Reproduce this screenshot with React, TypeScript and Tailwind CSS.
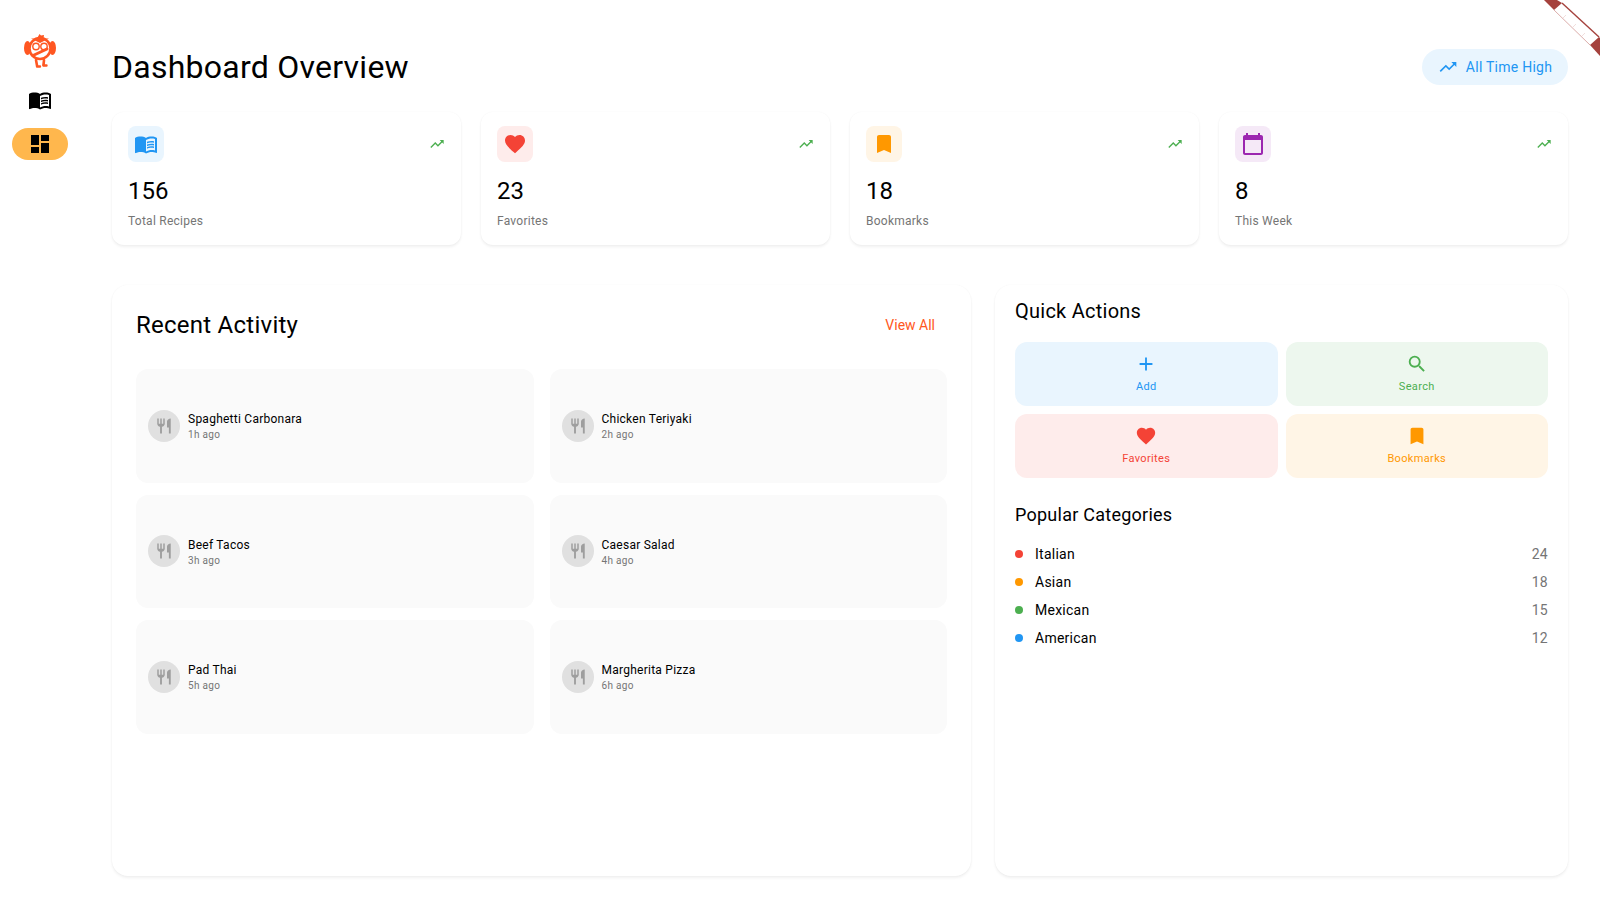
import { MdAdd, MdBookmark, MdCalendarToday, MdDashboard, MdFavorite, MdMenuBook, MdRestaurant, MdSearch, MdTrendingUp } from 'react-icons/md'
import type { ReactNode } from 'react'

// ── Data ─────────────────────────────────────────────────────────────────────

const STATS: { value: string; label: string; icon: ReactNode; bg: string }[] = [
  { value: '156', label: 'Total Recipes', icon: <MdMenuBook size={24} className="text-[#2196f3]" />, bg: 'bg-[#e9f5fe]' },
  { value: '23', label: 'Favorites', icon: <MdFavorite size={24} className="text-[#f44336]" />, bg: 'bg-[#feeceb]' },
  { value: '18', label: 'Bookmarks', icon: <MdBookmark size={24} className="text-[#ff9800]" />, bg: 'bg-[#fff5e6]' },
  { value: '8', label: 'This Week', icon: <MdCalendarToday size={24} className="text-[#9c27b0]" />, bg: 'bg-[#f5e9f7]' },
]

const ACTIVITY = [
  { name: 'Spaghetti Carbonara', time: '1h ago' },
  { name: 'Chicken Teriyaki', time: '2h ago' },
  { name: 'Beef Tacos', time: '3h ago' },
  { name: 'Caesar Salad', time: '4h ago' },
  { name: 'Pad Thai', time: '5h ago' },
  { name: 'Margherita Pizza', time: '6h ago' },
]

const CATEGORIES = [
  { name: 'Italian', count: 24, dot: 'bg-[#f44336]' },
  { name: 'Asian', count: 18, dot: 'bg-[#ff9800]' },
  { name: 'Mexican', count: 15, dot: 'bg-[#4caf50]' },
  { name: 'American', count: 12, dot: 'bg-[#2196f3]' },
]

// ── Main Component ───────────────────────────────────────────────────────────

export default function App() {
  return (
    <div className="relative flex h-[900px] overflow-hidden bg-white font-['Roboto',sans-serif] text-black">
      <Sidebar />

      <main className="flex min-w-0 flex-1 flex-col pt-[48px] pr-8 pb-[24px] pl-8">
        {/* Header */}
        <div className="mb-[27px] flex h-[37px] items-center justify-between">
          <h1 className="text-[32px] font-normal leading-none tracking-[0.25px]">Dashboard Overview</h1>
          <div className="flex h-9 w-[146px] items-center justify-center gap-2 rounded-full bg-[#e9f5fe] text-[14px] tracking-[0.25px] text-[#2196f3]">
            <MdTrendingUp size={20} />
            <span className="pt-px">All Time High</span>
          </div>
        </div>

        {/* Stat cards */}
        <div className="mb-[40px] grid grid-cols-4 gap-5">
          {STATS.map(s => (
            <StatCard key={s.label} {...s} />
          ))}
        </div>

        {/* Panels */}
        <div className="grid min-h-0 flex-1 grid-cols-[859px_573px] gap-6">
          <section className="rounded-2xl bg-white px-6 pt-6 shadow-[0_2px_3px_rgba(0,0,0,0.06),0_0_2px_rgba(0,0,0,0.04)]">
            <div className="mb-[28px] flex h-[32px] items-center justify-between">
              <h2 className="text-[24px] font-normal leading-none tracking-[0.25px]">Recent Activity</h2>
              <span className="pr-[12px] text-[14px] text-[#ff5722]">View All</span>
            </div>
            <div className="grid grid-cols-2 gap-x-4 gap-y-3">
              {ACTIVITY.map(a => (
                <div key={a.name} className="flex h-[113.5px] items-center gap-2 rounded-xl bg-[#fafafa] px-3">
                  <div className="flex h-8 w-8 items-center justify-center rounded-full bg-[#e0e0e0]">
                    <MdRestaurant size={18} className="text-[#9e9e9e]" />
                  </div>
                  <div className="pt-[2px]">
                    <p className="text-[12px] leading-[17px] tracking-[0.25px]">{a.name}</p>
                    <p className="text-[10px] leading-[14px] tracking-[0.3px] text-[#757575]">{a.time}</p>
                  </div>
                </div>
              ))}
            </div>
          </section>

          <section className="rounded-2xl bg-white px-5 pt-3 shadow-[0_2px_3px_rgba(0,0,0,0.06),0_0_2px_rgba(0,0,0,0.04)]">
            <h3 className="mb-[17px] text-[20px] font-normal leading-[28px] tracking-[0.25px]">Quick Actions</h3>
            <div className="mb-[23px] grid grid-cols-2 gap-2">
              <ActionTile label="Add" bg="bg-[#e9f5fe]" color="text-[#2196f3]" icon={<MdAdd size={22} />} />
              <ActionTile label="Search" bg="bg-[#edf7ee]" color="text-[#4caf50]" icon={<MdSearch size={22} />} />
              <ActionTile label="Favorites" bg="bg-[#feeceb]" color="text-[#f44336]" icon={<MdFavorite size={22} />} />
              <ActionTile label="Bookmarks" bg="bg-[#fff5e6]" color="text-[#ff9800]" icon={<MdBookmark size={22} />} />
            </div>
            <h3 className="mb-[11px] text-[18px] font-normal leading-[28px] tracking-[0.25px]">Popular Categories</h3>
            <div className="flex flex-col">
              {CATEGORIES.map(c => (
                <div key={c.name} className="flex h-[28px] items-center justify-between">
                  <div className="flex items-center gap-3">
                    <span className={`h-2 w-2 rounded-full ${c.dot}`} />
                    <span className="text-[14px] tracking-[0.25px]">{c.name}</span>
                  </div>
                  <span className="text-[14px] tracking-[0.25px] text-[#757575]">{c.count}</span>
                </div>
              ))}
            </div>
          </section>
        </div>
      </main>

      <CornerRibbon />
    </div>
  )
}

// ── Sidebar ──────────────────────────────────────────────────────────────────

function Sidebar() {
  return (
    <aside className="flex w-[80px] shrink-0 flex-col items-center pt-[34px]">
      <Logo />
      <MdMenuBook size={24} className="mt-[20px] text-black" />
      <div className="mt-[16px] flex h-8 w-14 items-center justify-center rounded-full bg-[#ffb74d]">
        <MdDashboard size={24} className="text-black" />
      </div>
    </aside>
  )
}

function Logo() {
  return (
    <svg width="32" height="34" viewBox="0 0 32 34" fill="none">
      <path d="M13 4.5L15.5 0l1.5 1.5L20 1l-.5 3.5z" fill="#ff5722" />
      <ellipse cx="3.5" cy="14" rx="3.5" ry="7" fill="#ff5722" />
      <ellipse cx="28.5" cy="14" rx="3.5" ry="7" fill="#ff5722" />
      <circle cx="16" cy="14.5" r="10.5" fill="#fff" stroke="#ff5722" strokeWidth="2.6" />
      <path d="M7 4.5h18L16 9z" fill="#ff5722" />
      <circle cx="12" cy="12.5" r="3.2" fill="#fff" stroke="#ff5722" strokeWidth="1.4" />
      <circle cx="20" cy="12.5" r="3.2" fill="#fff" stroke="#ff5722" strokeWidth="1.4" />
      <path d="M9 21.5l14-6.5" stroke="#ff5722" strokeWidth="3" strokeLinecap="round" />
      <path d="M12 26l1 5.5M20 26l-.5 5" stroke="#ff5722" strokeWidth="2.6" strokeLinecap="round" />
      <path d="M13 32.5h3M19.5 31.5h3" stroke="#ff5722" strokeWidth="2.4" strokeLinecap="round" />
    </svg>
  )
}

function CornerRibbon() {
  return (
    <svg width="70" height="70" viewBox="0 0 70 70" className="absolute top-0 right-0">
      <path d="M14 0H29L70 38V56z" fill="#fff" />
      <path d="M32 3L69 37" stroke="#a5423d" strokeWidth="1.4" />
      <path d="M24 10L60 45" stroke="#dcaeab" strokeWidth="1" />
      <path d="M36 15L33 18M46 24L43 27M55 33L52 36" stroke="#f1dedd" strokeWidth="1" />
      <path d="M14 0H27L32 3L24 10z" fill="#a5423d" />
      <path d="M60 45L69 37L70 38V56z" fill="#a5423d" />
    </svg>
  )
}

// ── Cards ────────────────────────────────────────────────────────────────────

function StatCard({ value, label, icon, bg }: { value: string; label: string; icon: ReactNode; bg: string }) {
  return (
    <div className="h-[133px] rounded-xl bg-white px-4 pt-[14px] shadow-[0_2px_3px_rgba(0,0,0,0.06),0_0_2px_rgba(0,0,0,0.04)]">
      <div className="flex items-center justify-between">
        <div className={`flex h-9 w-9 items-center justify-center rounded-lg ${bg}`}>{icon}</div>
        <MdTrendingUp size={16} className="text-[#4caf50]" />
      </div>
      <p className="mt-[13px] text-[24px] leading-[32px]">{value}</p>
      <p className="mt-[6px] text-[12px] leading-[16px] tracking-[0.25px] text-[#757575]">{label}</p>
    </div>
  )
}

function ActionTile({ label, bg, color, icon }: { label: string; bg: string; color: string; icon: ReactNode }) {
  return (
    <div className={`flex h-16 flex-col items-center justify-center gap-1 rounded-xl text-[11px] tracking-[0.35px] ${bg} ${color}`}>
      {icon}
      <span className="leading-[16px]">{label}</span>
    </div>
  )
}
